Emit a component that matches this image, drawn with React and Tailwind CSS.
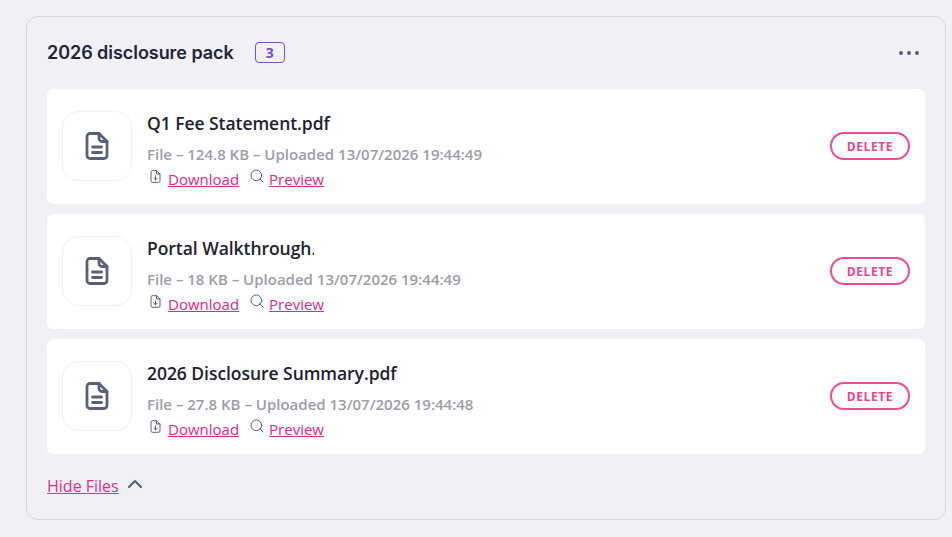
import { ChevronUp, Search } from 'lucide-react'

const files = [
  { name: 'Q1 Fee Statement.pdf', meta: 'File – 124.8 KB – Uploaded 13/07/2026 19:44:49' },
  { name: 'Portal Walkthrough.mp4', meta: 'File – 18 KB – Uploaded 13/07/2026 19:44:49', clip: true },
  { name: '2026 Disclosure Summary.pdf', meta: 'File – 27.8 KB – Uploaded 13/07/2026 19:44:48' },
]

function DocIcon() {
  return (
    <svg width="26" height="30" viewBox="0 0 26 30" fill="none" stroke="#5c5f7a" strokeWidth="2.8" strokeLinecap="round" strokeLinejoin="round">
      <path d="M3 5.5a3 3 0 0 1 3-3h9l8 8v14a3 3 0 0 1-3 3H6a3 3 0 0 1-3-3z" />
      <path d="M15 2.5v5a3 3 0 0 0 3 3h5" />
      <path d="M8.5 16h9M8.5 21.5h9" />
    </svg>
  )
}

function DownloadIcon() {
  return (
    <svg width="11" height="13" viewBox="0 0 11 13" fill="none" stroke="#5c5f7a" strokeWidth="1" strokeLinecap="round" strokeLinejoin="round">
      <path d="M1 2a1.3 1.3 0 0 1 1.3-1.3h4.2L10 4v7a1.3 1.3 0 0 1-1.3 1.3H2.3A1.3 1.3 0 0 1 1 11z" />
      <path d="M6.5.7V4H10" />
      <path d="M5.5 5.8v4M3.9 8.3l1.6 1.6 1.6-1.6" />
    </svg>
  )
}

function FileRow({ file }) {
  return (
    <div className="h-[115px] bg-white rounded-md pl-[15px] pr-[15px] pb-px flex items-center">
      {/* File icon */}
      <div className="w-[70px] h-[70px] shrink-0 rounded-2xl border border-[#f0f0f5] flex items-center justify-center">
        <DocIcon />
      </div>

      <div className="flex-1 min-w-0 ml-[15px] pt-[8px]">
        <div className={`text-[17.5px] leading-[24px] font-semibold tracking-[-0.05px] text-[#1f2130] whitespace-nowrap overflow-hidden ${file.clip ? 'w-[167px]' : ''}`}>
          {file.name}
        </div>
        <div className="mt-[9px] text-[15px] leading-5 font-semibold text-[#9d9da6]">{file.meta}</div>
        <div className="mt-[5px] flex items-center text-[15px] leading-5">
          <span className="ml-[3px] w-[18px] -mt-1.5"><DownloadIcon /></span>
          <a href="#" className="text-[#e0288c] underline">Download</a>
          <Search size={16} color="#5c5f7a" strokeWidth={1.5} className="ml-[10px] mr-[4px] -mt-1.5" />
          <a href="#" className="text-[#e0288c] underline">Preview</a>
        </div>
      </div>

      <button className="w-20 h-[28px] pt-px shrink-0 rounded-full border-2 border-[#f34b94] text-[#f0428f] text-xs font-bold tracking-[0.6px]">
        DELETE
      </button>
    </div>
  )
}

export default function App() {
  return (
    <div className="h-[537px] bg-[#f0f0f5] pt-4 pl-[26px] pr-[6px] overflow-hidden" style={{ fontFamily: '"Open Sans", sans-serif' }}>
      <div className="h-[504px] border border-[#d8d8e2] rounded-xl px-5">
        {/* Header */}
        <div className="h-[71px] mb-px flex items-center">
          <h2 className="text-[18px] font-semibold text-[#23243a] tracking-[-0.05px]" style={{ fontFamily: 'Inter, sans-serif' }}>
            2026 disclosure pack
          </h2>
          <span className="ml-[21px] w-[30px] h-[21px] rounded border border-[#7a4fc9] text-[#7a4fc9] text-[14px] font-bold flex items-center justify-center">
            3
          </span>
          <div className="ml-auto mr-[6px] flex gap-1">
            <span className="w-1 h-1 rounded-full bg-[#5c5f7a]" />
            <span className="w-1 h-1 rounded-full bg-[#5c5f7a]" />
            <span className="w-1 h-1 rounded-full bg-[#5c5f7a]" />
          </div>
        </div>

        <div className="flex flex-col gap-2.5">
          {files.map((file) => (
            <FileRow key={file.name} file={file} />
          ))}
        </div>

        <div className="mt-[20px] flex items-center text-[16px] leading-6">
          <a href="#" className="text-[#d92f8f] underline">Hide Files</a>
          <ChevronUp size={24} color="#5c5f7a" strokeWidth={2.2} className="ml-1 -mt-1" />
        </div>
      </div>
    </div>
  )
}
